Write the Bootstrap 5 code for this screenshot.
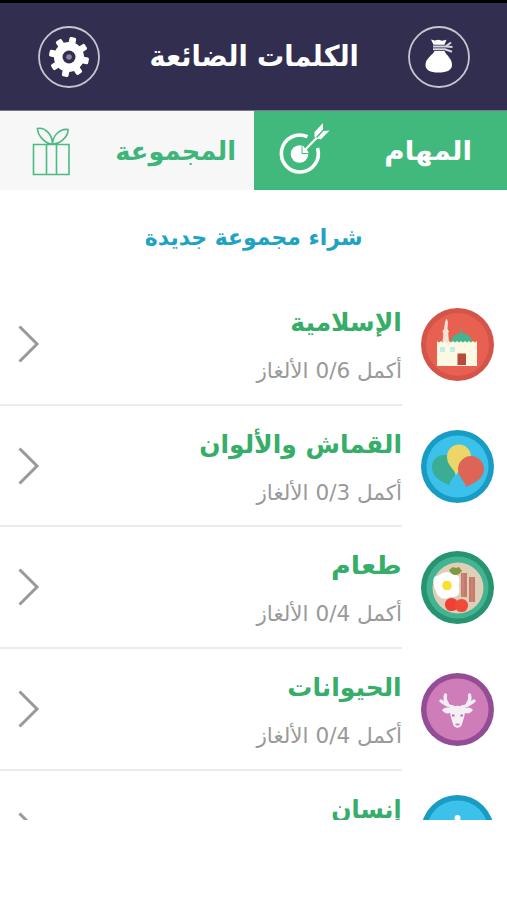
<!DOCTYPE html>
<html lang="ar" dir="rtl">
<head>
<meta charset="utf-8">
<meta name="viewport" content="width=device-width, initial-scale=1">
<title>الكلمات الضائعة</title>
<link href="https://cdn.jsdelivr.net/npm/bootstrap@5.3.0/dist/css/bootstrap.min.css" rel="stylesheet">
<style>
body{font-family:"DejaVu Sans",sans-serif;background:#fff}
.app{width:507px;height:900px}
.topbar{height:111px;background:#312e50;border-top:3px solid #000;border-bottom:1px solid #77758c;padding:0 37px 0 38px}
.topbar svg{width:62px;height:62px}
.fit{display:inline-block;white-space:nowrap;transform:scaleX(var(--sx,1));transform-origin:center;font-weight:700}
.fit-start{transform-origin:right}
.title-text{font-size:28.5px;line-height:40px;--sx:.95}
.tabs{height:79px}
.tab-item{font-size:26px;line-height:40px}
.tab-on{background:#42b97c;color:#fff;padding:0 35px 0 25px;--sx:1.07}
.tab-off{background:#f7f7f7;color:#3eb57a;padding:0 17px 0 32px;--sx:.99}
.buy{height:94px;color:#1ea3c4;font-size:22.5px;line-height:94px;--sx:.975}
.viewport-list{height:536px}
.entry{height:121.7px;padding-right:13px}
.entry .medal{width:73px;height:73px;margin:24px 0 0 19px}
.entry-body{border-bottom:2px solid #ebebeb;padding-left:17px}
.entry h2{font-size:25.5px;line-height:40px;color:#36ad69;margin:18px 0 0;--sx:.98}
.entry h2.wide{--sx:1.06}
.entry p{font-size:21px;line-height:30px;color:#999;margin:14px 0 0;--sx:1.025}
.entry p .fit{font-weight:400}
.entry .chev{width:24px;height:40px;margin-top:40px}
</style>
<script src="https://cdn.jsdelivr.net/npm/bootstrap@5.3.0/dist/js/bootstrap.bundle.min.js"></script>
</head>
<body>
<div class="app overflow-hidden">
<header class="topbar d-flex align-items-center justify-content-between">
<svg viewBox="0 0 62 62"><circle cx="31" cy="31" r="30" fill="none" stroke="#c6c5d0" stroke-width="1.8"/><path fill="#fff" d="M23 13.500l3.500 1 4-.8 3.500 1 4.500-1-2 5H25.500zM26.500 25h10c1 3.500 7.500 7 7.500 14 0 5-5 7.500-13.500 7.500S17.500 44 17.500 39c0-7 8-10.500 9-14z"/><path d="M25 20.500h12.500l5.500-4M25 23.300h12l7 2.500M37.500 20.500l7 .5" fill="none" stroke="#d5d4dd" stroke-width="2"/></svg>
<h1 class="title-text text-white m-0"><span class="fit">الكلمات الضائعة</span></h1>
<svg viewBox="0 0 62 62"><circle cx="31" cy="31" r="30" fill="none" stroke="#c6c5d0" stroke-width="1.800"/><g fill="#fff" transform="rotate(12 31 31)"><circle cx="31" cy="31" r="15"/><rect x="27.600" y="11" width="6.800" height="40" rx="1.600"/><rect x="27.600" y="11" width="6.800" height="40" rx="1.600" transform="rotate(45 31 31)"/><rect x="27.600" y="11" width="6.800" height="40" rx="1.600" transform="rotate(90 31 31)"/><rect x="27.600" y="11" width="6.800" height="40" rx="1.600" transform="rotate(135 31 31)"/></g><circle cx="31" cy="31" r="6.500" fill="#312e50"/><circle cx="31" cy="31" r="2.800" fill="#8a889b"/></svg>
</header>
<nav class="tabs row g-0">
<div class="col-6 tab-item tab-on d-flex align-items-center justify-content-between"><span class="fit fit-start">المهام</span>
<svg width="52" height="52" viewBox="1 1 52 52" fill="none" style="overflow:visible"><path d="M29.500 12.700A18.500 18.500 0 1 0 39.500 24" stroke="#fff" stroke-width="3.600"/><circle cx="21.500" cy="30" r="8.800" fill="#fff"/><path d="M28 25l11-11.500" stroke="#42b97c" stroke-width="6"/><path d="M25 28l14-14.500" stroke="#fff" stroke-width="2.200"/><path d="M24 22.500V29.500h7.500" fill="#fff" stroke="#42b97c" stroke-width="1"/><path fill="#fff" d="M36.500 13.500V8L45-1v6.500L38 13zM38.500 14.800L45.500 7l6-.5-8.500 8.800z"/></svg></div>
<div class="col-6 tab-item tab-off d-flex align-items-center justify-content-between"><span class="fit fit-start">المجموعة</span>
<svg width="38" height="50" viewBox="0 0 38 50" fill="none" stroke="#4abb83" stroke-width="1.600"><path d="M1.500 18.500h35.500v30H1.500zM14.500 18.500v30M24.500 18.500v30M20.500 18C14 18 5.500 10 5.500 2.500 13 1 20 8 20.500 17.500M20.500 18C21 9 28 2.500 36 3.500 36.500 10 29 18 20.500 18"/></svg></div>
</nav>
<div class="buy text-center"><span class="fit">شراء مجموعة جديدة</span></div>
<main class="viewport-list overflow-hidden">
<div class="entry d-flex">
<svg class="medal flex-shrink-0" viewBox="0 0 73 73"><circle cx="36.500" cy="36.500" r="36.500" fill="#d4544a"/><circle cx="36.500" cy="36.500" r="31.500" fill="#e8604f"/><path d="M30 34c0-5 4-8 10.500-9.500C47 26 51 29 51 34z" fill="#43b391"/><path d="M40.500 20.500v5" stroke="#43b391" stroke-width="1.200"/><path d="M21.500 34l.8-9-1-1.500L23 21l1-7 1.500-3.500L27 14l-.5 7 1.500 2.500-.8 1.500.8 9z" fill="#f5e2d3"/><path d="M16 33l2 1.500 2-1.500 2 1.500 2-1.500 2 1.500 2-1.500 2 1.500 2-1.500 2 1.500 2-1.500 2 1.500 2-1.500 2 1.500 2-1.500 2 1.500 2-1.500 2 1.500 2-1.500 2 1.500 2-1.500v25H16z" fill="#fbf8e4"/><path d="M19 39h5v5h-5zM29 39h5v5h-5z" fill="#bdeee8"/><path d="M36.500 45.500H45V57h-8.500z" fill="#b9493b"/></svg>
<div class="entry-body flex-grow-1 d-flex justify-content-between"><div><h2><span class="fit fit-start">الإسلامية</span></h2><p><span class="fit fit-start">أكمل 0/6 الألغاز</span></p></div><svg class="chev" viewBox="0 0 24 40"><path d="M2.500 2.500l17.500 17.500L2.500 37.500" fill="none" stroke="#999" stroke-width="3"/></svg></div></div>
<div class="entry d-flex">
<svg class="medal flex-shrink-0" viewBox="0 0 73 73"><circle cx="36.500" cy="36.500" r="36.500" fill="#189cc3"/><circle cx="36.500" cy="36.500" r="31" fill="#3bc1ea"/><path d="M28 55c-6-3-17-7-17-18 0-8 6-12 13-12s12 6 12 13-6 11-8 17z" fill="#3aad94"/><path d="M35 46c-1-7-9-10-9-19 0-7 5-12.500 12-12.500S50 20 50 27c0 8-13 11-15 19z" fill="#ecd668"/><path d="M45 57c-1-6-8-10-8-18 0-7 6-13 13-13s13 6 13 13c0 10-10 14-18 18z" fill="#dc6558"/></svg>
<div class="entry-body flex-grow-1 d-flex justify-content-between"><div><h2><span class="fit fit-start">القماش والألوان</span></h2><p><span class="fit fit-start">أكمل 0/3 الألغاز</span></p></div><svg class="chev" viewBox="0 0 24 40"><path d="M2.500 2.500l17.500 17.500L2.500 37.500" fill="none" stroke="#999" stroke-width="3"/></svg></div></div>
<div class="entry d-flex">
<svg class="medal flex-shrink-0" viewBox="0 0 73 73"><circle cx="36.500" cy="36.500" r="36.500" fill="#27946f"/><circle cx="36.500" cy="36.500" r="31" fill="#44b392"/><circle cx="37" cy="37" r="25.500" fill="#dfcfb8"/><path d="M28 19l4-3 3 1 3-1 3 4-3 3-3 1-4 1-1-3z" fill="#819a3e"/><path d="M40 22h6v24h-6zM48 26h6v25h-6z" fill="#c57b6c"/><path d="M42 22v24M51 26v25" stroke="#d08c7c"/><path d="M15 25c4 0 6-4 11-4 4 0 5 3 8 3 5 0 5 4 4 9-1 4 2 7-1 11-3 3-6 1-10 3-4 2-9 0-11-4-1-4-3-5-3-9-1-4-1-8 2-9z" fill="#fff"/><circle cx="26" cy="34.500" r="4.800" fill="#f8e02e"/><circle cx="30.500" cy="53.500" r="6.600" fill="#ee4034"/><circle cx="40.500" cy="54.500" r="6.600" fill="#f04b3a"/></svg>
<div class="entry-body flex-grow-1 d-flex justify-content-between"><div><h2 class="wide"><span class="fit fit-start">طعام</span></h2><p><span class="fit fit-start">أكمل 0/4 الألغاز</span></p></div><svg class="chev" viewBox="0 0 24 40"><path d="M2.500 2.500l17.500 17.500L2.500 37.500" fill="none" stroke="#999" stroke-width="3"/></svg></div></div>
<div class="entry d-flex">
<svg class="medal flex-shrink-0" viewBox="0 0 73 73"><circle cx="36.500" cy="36.500" r="36.500" fill="#934d95"/><circle cx="36.500" cy="36.500" r="31" fill="#cf7db8"/><path d="M32 34c-5-1-8-3-12-6M26.500 31c-2-3-3-6-2-9M41 34c5-1 8-3 12-6M46.500 31c2-3 3-6 2-9" fill="none" stroke="#f1edf4" stroke-width="3.400" stroke-linecap="round"/><path d="M21 37c2-3 6-3 9-2 3-3 10-3 13 0 3-1 7-1 9 2-2 3-5 4-8 3-1 5-2 8-3 11-1 5-8 5-9 0-1-3-2-6-3-11-3 1-6 0-8-3z" fill="#f4f0f5"/><path d="M31 42.500h2.500M39.500 42.500H42" stroke="#b875a9" stroke-width="2.200"/><path d="M34.500 51.500h4" stroke="#c77cb2" stroke-width="1.800"/></svg>
<div class="entry-body flex-grow-1 d-flex justify-content-between"><div><h2><span class="fit fit-start">الحيوانات</span></h2><p><span class="fit fit-start">أكمل 0/4 الألغاز</span></p></div><svg class="chev" viewBox="0 0 24 40"><path d="M2.500 2.500l17.500 17.500L2.500 37.500" fill="none" stroke="#999" stroke-width="3"/></svg></div></div>
<div class="entry d-flex">
<svg class="medal flex-shrink-0" viewBox="0 0 73 73"><circle cx="36.500" cy="36.500" r="36.500" fill="#189cc3"/><circle cx="36.500" cy="36.500" r="31" fill="#3bc1ea"/><circle cx="36.500" cy="23" r="3" fill="#fff"/></svg>
<div class="entry-body flex-grow-1 d-flex justify-content-between"><div><h2 style="--sx:.93"><span class="fit fit-start">إنسان</span></h2></div><svg class="chev" viewBox="0 0 24 40"><path d="M2.500 2.500l17.500 17.500L2.500 37.500" fill="none" stroke="#999" stroke-width="3"/></svg></div></div>
</main>
</div>
</body>
</html>
